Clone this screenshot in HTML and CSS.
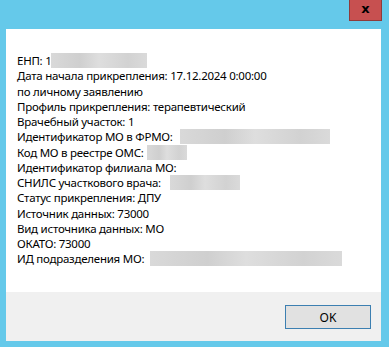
FILE: index.html
```html
<!DOCTYPE html>
<html>

<head>
    <meta charset="UTF-8">
    <title>Прикрепление</title>
    <link rel="stylesheet" href="styles.css">
</head>

<body>
    <div class="window">
        <div class="titlebar">
            <a class="close" href="javascript:;">x</a>
        </div>
        <div class="client">
            <div class="info">
                <p>ЕНП: 1<span class="blur b-enp"></span></p>
                <p>Дата начала прикрепления: 17.12.2024 0:00:00</p>
                <p>по личному заявлению</p>
                <p>Профиль прикрепления: терапевтический</p>
                <p>Врачебный участок: 1</p>
                <p>Идентификатор МО в ФРМО: <span class="blur b-frmo"></span></p>
                <p>Код МО в реестре ОМС: <span class="blur b-oms"></span></p>
                <p>Идентификатор филиала МО:</p>
                <p>СНИЛС участкового врача: <span class="blur b-snils"></span></p>
                <p>Статус прикрепления: ДПУ</p>
                <p>Источник данных: 73000</p>
                <p>Вид источника данных: МО</p>
                <p>ОКАТО: 73000</p>
                <p>ИД подразделения МО: <span class="blur b-unit"></span></p>
            </div>
            <div class="footer">
                <button class="btn-ok">OK</button>
            </div>
        </div>
    </div>
</body>

</html>
```

FILE: styles.css
```css
* {
    margin: 0;
    padding: 0;
    box-sizing: border-box;
}

body {
    background-color: #65c9ea;
    font-family: "Noto Sans", "Liberation Sans", sans-serif;
    font-size: 11.5px;
    letter-spacing: -0.25px;
    color: #000;
}

.window {
    width: 389px;
    height: 347px;
    display: flex;
    flex-direction: column;
}

.titlebar {
    height: 29px;
    display: flex;
    justify-content: flex-end;
    align-items: flex-start;
    padding-right: 7px;
}

.close {
    display: block;
    width: 33px;
    height: 21px;
    background-color: #c75050;
    border: 1px solid #8e3b3b;
    border-top: none;
    color: #000;
    font-family: "DejaVu Sans", sans-serif;
    font-weight: bold;
    font-size: 13px;
    letter-spacing: 0;
    line-height: 17px;
    text-align: center;
    text-decoration: none;
}

.client {
    margin: 0 8px 6px 6px;
    flex: 1;
    display: flex;
    flex-direction: column;
    background-color: #fff;
}

.info {
    flex: 1;
    padding: 24px 0 0 11px;
    line-height: 15.25px;
}

.info p {
    white-space: nowrap;
}

.blur {
    display: inline-block;
    height: 15px;
    vertical-align: -3px;
    background: linear-gradient(90deg, #d9d9d9, #cfcfcf 30%, #dedede 50%, #d2d2d2 80%, #dadada);
}

.b-enp {
    width: 96px;
    margin-left: -1px;
}

.b-frmo {
    width: 150px;
    margin-left: 5px;
}

.b-oms {
    width: 40px;
    margin-left: 1px;
}

.b-snils {
    width: 70px;
    margin-left: 6px;
}

.b-unit {
    width: 192px;
    margin-left: 3px;
}

.footer {
    height: 49px;
    background-color: #f0f0f0;
    display: flex;
    justify-content: flex-end;
    align-items: flex-start;
    padding: 13px 10px 0 0;
}

.btn-ok {
    width: 86px;
    height: 24px;
    background-color: #e1e1e1;
    border: 1px solid #3c7fb1;
    font-family: "Noto Sans", "Liberation Sans", sans-serif;
    font-size: 12px;
    color: #000;
}
```
